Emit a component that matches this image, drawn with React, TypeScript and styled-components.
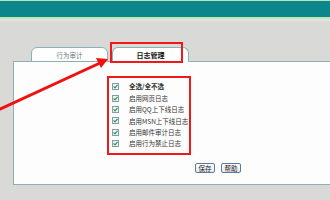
import React from 'react'
import styled, { createGlobalStyle } from 'styled-components'

const GlobalStyle = createGlobalStyle`
    html, body {
        margin: 0;
        padding: 0;
        background: #d9d9d8;
        font-family: "Noto Sans CJK SC", "DejaVu Sans", sans-serif;
    }
`

const items = [
    { label: '全选/全不选', bold: true },
    { label: '启用网页日志' },
    { label: '启用QQ上下线日志' },
    { label: '启用MSN上下线日志' },
    { label: '启用邮件审计日志' },
    { label: '启用行为禁止日志' },
]

export default function App() {
    return (
        <Page>
            <GlobalStyle />
            <Header />
            <TabRow>
                <Tab>行为审计</Tab>
                <Tab active>日志管理</Tab>
                <TabMark />
            </TabRow>
            <Panel>
                <OptionBox>
                    {items.map((item) => (
                        <OptionRow key={item.label}>
                            <CheckBox>
                                <svg width="5" height="5" viewBox="0 0 5 5">
                                    <path d="M0.6 2.4 L2 3.8 L4.5 0.8" stroke="#2f9a2f" strokeWidth="1.2" fill="none" />
                                </svg>
                            </CheckBox>
                            <OptionLabel bold={item.bold}>{item.label}</OptionLabel>
                        </OptionRow>
                    ))}
                </OptionBox>
                <ButtonRow>
                    <SmallButton>保存</SmallButton>
                    <SmallButton>帮助</SmallButton>
                </ButtonRow>
            </Panel>
            <Arrow width="330" height="200" viewBox="0 0 330 200">
                <line x1="-2" y1="110" x2="100" y2="63" stroke="#f01010" strokeWidth="3" />
                <polygon points="108,59 96,58 101,68" fill="#f01010" />
            </Arrow>
        </Page>
    )
}

const Page = styled.div`
    position: relative;
    width: 330px;
    height: 200px;
    overflow: hidden;
    background: #d9d9d8;
`

const Header = styled.div`
    height: 16px;
    background: #0b868b;
    border-top: 1px solid #b7e4b2;
    border-bottom: 2px solid #bfe8b9;
    box-shadow: 0 2px 0 #e2e2e0;
`

const TabRow = styled.div`
    position: relative;
    display: flex;
    gap: 4px;
    margin-top: 28px;
    padding-left: 31px;
    height: 15px;
`

const Tab = styled.div<{ active?: boolean }>`
    position: relative;
    z-index: ${(p) => (p.active ? 2 : 0)};
    width: 77px;
    box-sizing: border-box;
    border: 1px solid #86b4b4;
    border-bottom: ${(p) => (p.active ? 'none' : '1px solid #86b4b4')};
    border-radius: 6px 6px 0 0;
    background: #fdfefd;
    display: flex;
    align-items: center;
    justify-content: center;
    font-size: ${(p) => (p.active ? '7px' : '6.5px')};
    font-weight: ${(p) => (p.active ? 700 : 400)};
    color: ${(p) => (p.active ? '#111' : '#6a7a7a')};
    padding-bottom: ${(p) => (p.active ? '1px' : '0')};
`

const TabMark = styled.div`
    position: absolute;
    z-index: 3;
    left: 110px;
    top: -5px;
    width: 73px;
    height: 21px;
    box-sizing: border-box;
    border: 2px solid #f01818;
`

const Panel = styled.div`
    position: relative;
    z-index: 1;
    margin-top: -1px;
    margin-left: 13px;
    height: 124px;
    box-sizing: border-box;
    border: 1px solid #8cb1b1;
    border-right: none;
    background: #fcfdfc;
    padding-top: 14px;
    padding-left: 93px;
`

const OptionBox = styled.div`
    width: 84px;
    height: 79px;
    box-sizing: border-box;
    border: 2px solid #f01818;
    padding: 3px 0 0 3px;
    display: flex;
    flex-direction: column;
`

const OptionRow = styled.div`
    display: flex;
    align-items: center;
    height: 11.4px;
    gap: 10px;
`

const CheckBox = styled.span`
    width: 7px;
    height: 7px;
    box-sizing: border-box;
    border: 1px solid #7f9db9;
    background: #eef3f6;
    display: flex;
    align-items: center;
    justify-content: center;
`

const OptionLabel = styled.span<{ bold?: boolean }>`
    font-size: 6.5px;
    line-height: 1;
    white-space: nowrap;
    color: #333;
    font-weight: ${(p) => (p.bold ? 700 : 400)};
`

const ButtonRow = styled.div`
    display: flex;
    gap: 6px;
    margin-top: 8px;
    padding-left: 88px;
`

const SmallButton = styled.button`
    width: 20px;
    height: 10px;
    padding: 0;
    box-sizing: border-box;
    border: 1px solid #5d7a99;
    border-radius: 2px;
    background: linear-gradient(#ffffff, #e6e9ee);
    font-family: "Noto Sans CJK SC", sans-serif;
    font-size: 6.5px;
    line-height: 1;
    color: #222;
`

const Arrow = styled.svg`
    position: absolute;
    left: 0;
    top: 0;
    z-index: 5;
    pointer-events: none;
`
